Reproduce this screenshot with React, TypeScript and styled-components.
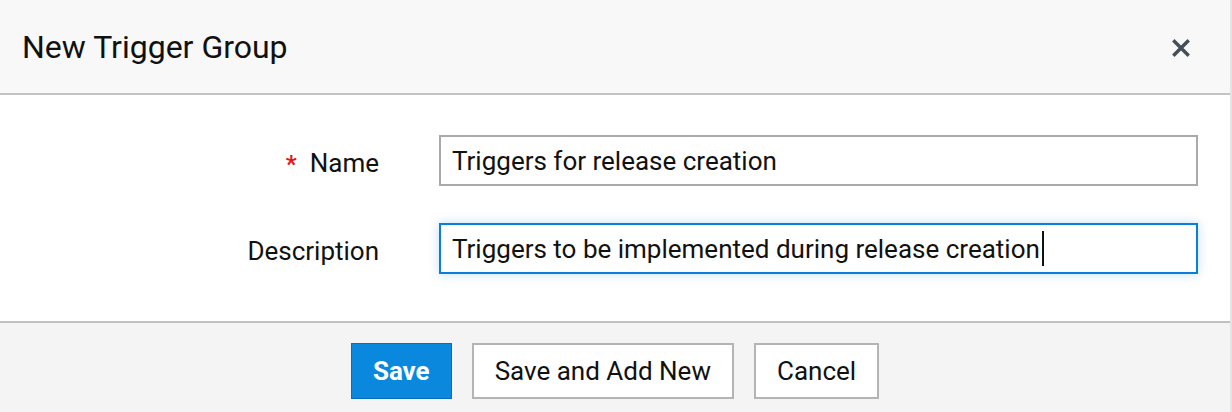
import React, { FC } from 'react';
import styled, { createGlobalStyle } from 'styled-components';

const GlobalStyle = createGlobalStyle`
  html, body {
    margin: 0;
    padding: 0;
    background: #ffffff;
  }
  body {
    font-family: Roboto, "Liberation Sans", Arial, sans-serif;
    color: #111111;
  }
`;

const Dialog = styled.div`
  width: 1232px;
  height: 412px;
  display: flex;
  flex-direction: column;
  box-sizing: border-box;
  border-right: 2px solid #e4e4e4;
  overflow: hidden;
`;

const Header = styled.header`
  height: 93px;
  flex: none;
  display: flex;
  align-items: center;
  justify-content: space-between;
  padding: 0 38px 0 22px;
  background: #f8f8f8;
  border-bottom: 2px solid #c4c4c4;
`;

const Title = styled.h1`
  margin: 0;
  font-size: 32px;
  font-weight: 400;
  color: #111111;
`;

const CloseButton = styled.button`
  width: 22px;
  height: 22px;
  padding: 0;
  border: 0;
  background: none;
  display: flex;
  align-items: center;
  justify-content: center;
  cursor: pointer;
  margin-top: 2px;
`;

const Body = styled.div`
  height: 226px;
  flex: none;
  box-sizing: border-box;
  display: flex;
  flex-direction: column;
  gap: 37px;
  padding: 40px 32px 0 0;
  background: #ffffff;
`;

const Row = styled.div`
  display: grid;
  grid-template-columns: 379px 1fr;
  column-gap: 60px;
  align-items: center;
`;

const Label = styled.label`
  display: flex;
  justify-content: flex-end;
  align-items: center;
  gap: 13px;
  font-size: 26px;
  color: #111111;
  margin-top: 4px;
`;

const Required = styled.span`
  color: #e8141b;
  font-size: 24px;
  font-weight: 700;
  margin-top: 2px;
`;

const Field = styled.div<{ $focused?: boolean }>`
  height: 51px;
  box-sizing: border-box;
  display: flex;
  align-items: center;
  padding: 0 11px;
  font-size: 26px;
  color: #111111;
  background: #ffffff;
  border: 2px solid ${(p) => (p.$focused ? '#0a7ed8' : '#aaaaaa')};
  box-shadow: ${(p) => (p.$focused ? '0 0 10px rgba(10, 126, 216, 0.25)' : 'none')};
  white-space: nowrap;
`;

const Caret = styled.span`
  display: inline-block;
  width: 2px;
  height: 35px;
  background: #111111;
  margin-left: 2px;
`;

const Footer = styled.footer`
  flex: 1;
  display: flex;
  justify-content: center;
  align-items: flex-start;
  gap: 20px;
  padding: 20px 0 0 0;
  background: #f4f4f4;
  border-top: 2px solid #c0c0c0;
`;

const Button = styled.button<{ $primary?: boolean }>`
  height: 56px;
  box-sizing: border-box;
  padding: 0 21px;
  font-family: Roboto, "Liberation Sans", Arial, sans-serif;
  font-size: 26px;
  font-weight: ${(p) => (p.$primary ? 700 : 400)};
  color: ${(p) => (p.$primary ? '#ffffff' : '#111111')};
  background: ${(p) => (p.$primary ? '#0a88de' : '#ffffff')};
  border: ${(p) => (p.$primary ? '1px solid #0a6cc0' : '2px solid #b4b4b4')};
  cursor: pointer;
`;

const CloseIcon: FC = () => (
  <svg width="18" height="18" viewBox="0 0 18 18">
    <path d="M2.5 2.5 L15.5 15.5 M15.5 2.5 L2.5 15.5" stroke="#454d56" strokeWidth="3.4" strokeLinecap="square" />
  </svg>
);

const App: FC = () => (
  <>
    <GlobalStyle />
    <Dialog>
      <Header>
        <Title>New Trigger Group</Title>
        <CloseButton aria-label="Close">
          <CloseIcon />
        </CloseButton>
      </Header>
      <Body>
        <Row>
          <Label>
            <Required>*</Required>
            Name
          </Label>
          <Field>Triggers for release creation</Field>
        </Row>
        <Row>
          <Label>Description</Label>
          <Field $focused>
            Triggers to be implemented during release creation
            <Caret />
          </Field>
        </Row>
      </Body>
      <Footer>
        <Button $primary>Save</Button>
        <Button>Save and Add New</Button>
        <Button>Cancel</Button>
      </Footer>
    </Dialog>
  </>
);

export default App;
